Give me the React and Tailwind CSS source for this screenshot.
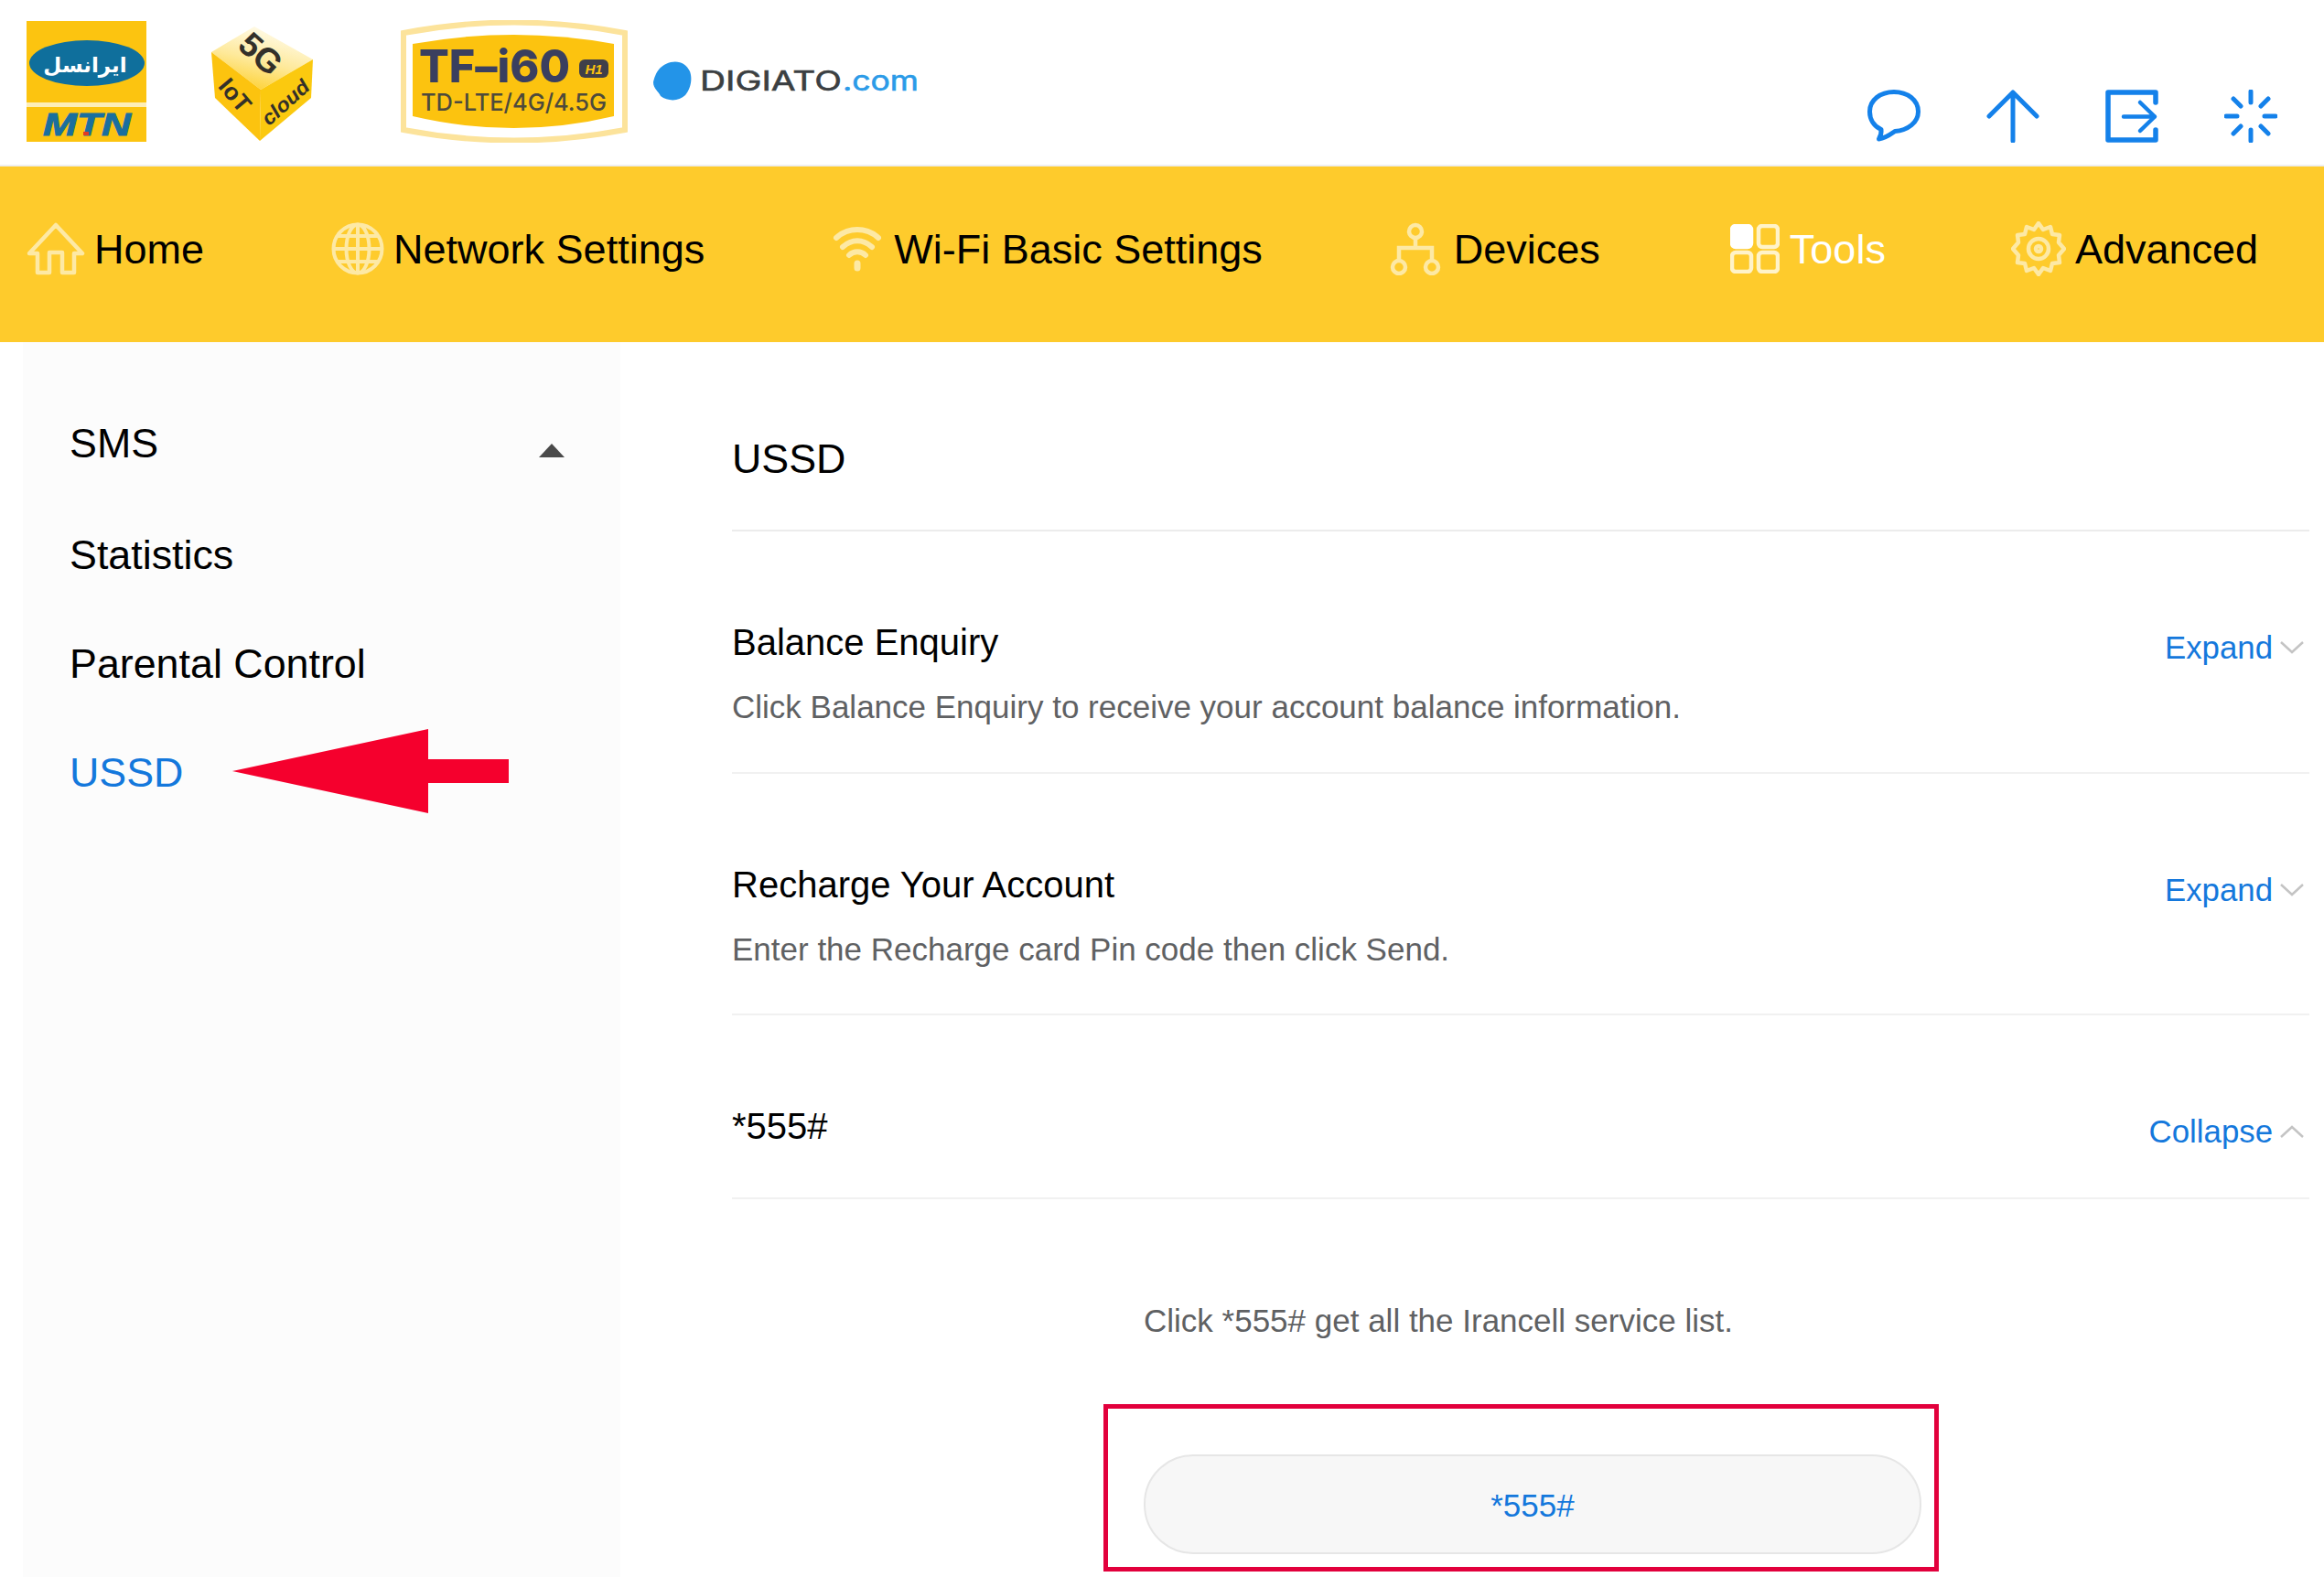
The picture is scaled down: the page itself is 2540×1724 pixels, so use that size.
import React from "react";

const BLUE = "#1481ea";

const MtnLogo = () => (
    <svg width="131" height="132" viewBox="0 0 131 132" className="shrink-0">
        <rect x="0" y="0" width="131" height="132" fill="#fcc410" />
        <rect x="0" y="89" width="131" height="5" fill="#fdeeb8" />
        <ellipse cx="66" cy="46" rx="63" ry="25" fill="#0f6f9c" />
        <text x="64" y="56" textAnchor="middle" fontSize="23" fontWeight="700" fontFamily="'DejaVu Sans', sans-serif" fill="#fff">ایرانسل</text>
        <text x="66" y="125" textAnchor="middle" fontSize="35" fontWeight="700" fontStyle="italic" fontFamily="'Liberation Sans', sans-serif" fill="#1a6f9e" stroke="#1a6f9e" strokeWidth="1" textLength="96" lengthAdjust="spacingAndGlyphs">MTN</text>
        <rect x="62" y="121" width="6" height="4" fill="#e23b24" />
    </svg>
);

const CubeLogo = () => (
    <svg width="114" height="130" viewBox="0 0 114 130" className="shrink-0">
        <defs>
            <linearGradient id="cubeTop" x1="0.7" y1="0" x2="0.3" y2="1">
                <stop offset="0" stopColor="#fffdf4" />
                <stop offset="0.55" stopColor="#fee99a" />
                <stop offset="1" stopColor="#fdd02f" />
            </linearGradient>
        </defs>
        <polygon points="47,3 111,39 54,72 0,31" fill="url(#cubeTop)" />
        <polygon points="0,31 54,72 53,128 4,81" fill="#fcc30f" />
        <polygon points="111,39 54,72 53,128 109,81" fill="#fbc90f" />
        <text transform="translate(54,33) rotate(42)" fontSize="37" fontWeight="700" dominantBaseline="central" fontFamily="'Liberation Sans', sans-serif" fill="#33302a" textAnchor="middle">5G</text>
        <text transform="translate(26,78) rotate(50)" fontSize="26" fontWeight="700" dominantBaseline="central" fontFamily="'Liberation Sans', sans-serif" fill="#33302a" textAnchor="middle">IoT</text>
        <text transform="translate(81,86) rotate(-42)" fontSize="22" fontWeight="700" fontStyle="italic" dominantBaseline="central" fontFamily="'Liberation Sans', sans-serif" fill="#33302a" textAnchor="middle" textLength="62" lengthAdjust="spacingAndGlyphs">cloud</text>
    </svg>
);

const ModelBadge = () => (
    <svg width="248" height="134" viewBox="0 0 248 134" className="shrink-0">
        <path d="M3 14 Q124 -9 245 14 L245 120 Q124 143 3 120 Z" fill="#fff" stroke="#fce39b" strokeWidth="6" />
        <path d="M13 26 Q124 6 233 26 L233 105 Q124 131 13 105 Z" fill="#fcc30f" />
        <text x="20" y="68" fontSize="49" fontWeight="800" fontFamily="Inter, sans-serif" fill="#3a3f5f" textLength="165" lengthAdjust="spacingAndGlyphs">TF–i60</text>
        <rect x="195" y="43" width="32" height="20" rx="6" fill="#3f3f4a" />
        <text x="211" y="59" textAnchor="middle" fontSize="15" fontWeight="700" fontStyle="italic" fontFamily="'Liberation Sans', sans-serif" fill="#fcc30f">H1</text>
        <text x="22" y="99" fontSize="26" fontWeight="500" fontFamily="Inter, sans-serif" fill="#4d4a3c" textLength="203" lengthAdjust="spacingAndGlyphs">TD-LTE/4G/4.5G</text>
    </svg>
);

const DigiatoLogo = () => (
    <svg width="294" height="44" viewBox="0 0 294 44" className="shrink-0">
        <path d="M20 1C30 -1 37 3 41 11C44 19 42 30 36 37C29 44 17 44 9 38C7 33 1 30 1 23C3 15 6 5 20 1Z" fill="#2394e8" />
        <text x="52" y="32" fontSize="30" fontFamily="Inter, sans-serif" fill="#3b3f42" stroke="#3b3f42" strokeWidth="0.6" textLength="155" lengthAdjust="spacingAndGlyphs">DIGIATO</text>
        <text x="208" y="32" fontSize="30" fontFamily="Inter, sans-serif" fill="#2b9be8" stroke="#2b9be8" strokeWidth="0.6" textLength="83" lengthAdjust="spacingAndGlyphs">.com</text>
    </svg>
);

const ChatIcon = () => (
    <svg width="58" height="58" viewBox="0 0 58 58" fill="none" stroke={BLUE} strokeWidth="5" strokeLinejoin="round" strokeLinecap="round">
        <path d="M29 2.5C44 2.5 55.5 11.5 55.5 24C55.5 36 44 44.5 30 45.5C25 49 20 53 12.5 54C14.5 50.5 15.5 47.5 15 43.5C7 40 2.5 32.5 2.5 24C2.5 11.5 14 2.5 29 2.5Z" />
    </svg>
);

const UpIcon = () => (
    <svg width="58" height="58" viewBox="0 0 58 58" fill="none" stroke={BLUE} strokeWidth="5" strokeLinecap="round" strokeLinejoin="round">
        <path d="M29 3V56M3 29L29 3L55 29" />
    </svg>
);

const LogoutIcon = () => (
    <svg width="58" height="58" viewBox="0 0 58 58" fill="none" stroke={BLUE} strokeWidth="5.5" strokeLinecap="round" strokeLinejoin="round">
        <path d="M55 14V3H3V55H55V44" />
        <path d="M20 29.500H54M38 14L54 29.500L38 45" strokeWidth="4.500" />
    </svg>
);

const SpinnerIcon = () => (
    <svg width="58" height="58" viewBox="0 0 58 58" fill="none" stroke={BLUE} strokeWidth="5" strokeLinecap="round">
        <path d="M29 2V14M29 44V56M2 29H14M44 29H56M10 10L18 18M40 40L48 48M48 10L40 18M18 40L10 48" />
    </svg>
);

const NAV_STROKE = "#fde9a5";

const HomeIcon = () => (
    <svg width="64" height="58" viewBox="0 0 64 58" fill="none" stroke={NAV_STROKE} strokeWidth="4.500" strokeLinejoin="round">
        <path d="M3 34L32 3L61 34H52V55H39V33H25V55H12V34Z" />
    </svg>
);

const GlobeIcon = () => (
    <svg width="58" height="58" viewBox="0 0 58 58" fill="none" stroke={NAV_STROKE} strokeWidth="4">
        <circle cx="29" cy="29" r="26.500" />
        <ellipse cx="29" cy="29" rx="12.500" ry="26.500" />
        <path d="M29 2.500V55.500M2.500 29H55.500M7 15H51M7 43H51" />
    </svg>
);

const WifiIcon = () => (
    <svg width="56" height="50" viewBox="0 0 56 50" fill="none" stroke={NAV_STROKE} strokeWidth="6" strokeLinecap="round">
        <path d="M5 13C18 1 38 1 51 13M12 23C22 14 34 14 44 23M19 32C24 27 32 27 37 32" />
        <path d="M28 41V46" strokeWidth="7" />
    </svg>
);

const DevicesIcon = () => (
    <svg width="56" height="58" viewBox="0 0 56 58" fill="none" stroke={NAV_STROKE} strokeWidth="4.500">
        <circle cx="28" cy="10" r="7" />
        <path d="M28 17V28M10 42V28H46V42" />
        <circle cx="10" cy="49" r="7" />
        <circle cx="46" cy="49" r="7" />
    </svg>
);

const ToolsIcon = () => (
    <svg width="54" height="54" viewBox="0 0 54 54" fill="none" stroke="#fff3c9" strokeWidth="4.500">
        <rect x="2" y="2" width="21" height="23" rx="4" fill="#fff" stroke="#fff" />
        <rect x="31" y="2" width="21" height="23" rx="4" />
        <rect x="2" y="31" width="21" height="21" rx="4" />
        <rect x="31" y="31" width="21" height="21" rx="4" />
    </svg>
);

const GearIcon = () => (
    <svg width="60" height="60" viewBox="0 0 60 60" fill="none" stroke={NAV_STROKE} strokeWidth="4.500" strokeLinejoin="round">
        <path d="M30 2L35 9L43 6L45 14L53 15L52 23L58 30L52 37L53 45L45 46L43 54L35 51L30 58L25 51L17 54L15 46L7 45L8 37L2 30L8 23L7 15L15 14L17 6L25 9Z" />
        <circle cx="30" cy="30" r="11" />
        <circle cx="30" cy="30" r="3" />
    </svg>
);

const navItems = [
    { label: "Home", icon: <HomeIcon />, gap: "gap-[10px]", text: "text-black" },
    { label: "Network Settings", icon: <GlobeIcon />, gap: "gap-[10px]", text: "text-black" },
    { label: "Wi-Fi Basic Settings", icon: <WifiIcon />, gap: "gap-[12px]", text: "text-black" },
    { label: "Devices", icon: <DevicesIcon />, gap: "gap-[14px]", text: "text-black" },
    { label: "Tools", icon: <ToolsIcon />, gap: "gap-[11px] ml-[3px]", text: "text-white" },
    { label: "Advanced", icon: <GearIcon />, gap: "gap-[10px] -ml-[2px]", text: "text-black" },
];

const Chevron = ({ up }) => (
    <svg width="26" height="14" viewBox="0 0 26 14" fill="none" stroke="#c4c4c4" strokeWidth="2.500">
        <path d={up ? "M1 13L13 2L25 13" : "M1 1L13 12L25 1"} />
    </svg>
);

const Toggle = ({ label, up }) => (
    <div className="flex items-center gap-[8px] mt-[8px] text-[34.800px] leading-[36px] text-[#1478dc]">
        <span>{label}</span>
        <Chevron up={up} />
    </div>
);

const Section = ({ title, desc, toggle, up, height }) => (
    <div className={`border-b-2 border-[#f1f1f1] pt-[101px] pr-[6px] ${height}`}>
        <div className="flex justify-between items-start">
            <div className="text-[40px] leading-[40px] text-black">{title}</div>
            <Toggle label={toggle} up={up} />
        </div>
        {desc && <div className="mt-[29px] text-[35px] leading-[36px] text-[#5f6163]">{desc}</div>}
    </div>
);

export default function App() {
    return (
        <div className="w-[2540px] h-[1724px] overflow-hidden bg-white font-['Liberation_Sans',Arial,sans-serif]">
            <header className="h-[182px] border-b-2 border-[#efefef] flex items-start pl-[29px]">
                <div className="mt-[22px] flex items-start">
                    <div className="mt-[1px]"><MtnLogo /></div>
                    <div className="ml-[71px] mt-[4px]"><CubeLogo /></div>
                    <div className="ml-[93px]"><ModelBadge /></div>
                    <div className="ml-[27px] mt-[45px]"><DigiatoLogo /></div>
                </div>
                <div className="ml-auto mt-[98px] mr-[51px] flex gap-[72px]">
                    <ChatIcon />
                    <UpIcon />
                    <LogoutIcon />
                    <SpinnerIcon />
                </div>
            </header>

            <nav className="h-[192px] bg-[#fecb2c] flex items-center gap-[139px] pl-[29px] pb-[12px] text-[45px] leading-none">
                {navItems.map((item) => (
                    <div key={item.label} className={`flex items-center ${item.gap} ${item.text}`}>
                        {item.icon}
                        <span>{item.label}</span>
                    </div>
                ))}
            </nav>

            <div className="flex">
                <aside className="ml-[25px] w-[653px] h-[1350px] bg-[#fcfcfc] pl-[51px] pt-[88px] text-[44.800px] leading-[44px] text-black">
                    <div className="flex h-[122px]">
                        <span>SMS</span>
                        <svg width="28" height="15" viewBox="0 0 28 15" className="ml-[416px] mt-[23px]">
                            <polygon points="14,0 28,15 0,15" fill="#4a4a4a" />
                        </svg>
                    </div>
                    <div className="h-[119px]">Statistics</div>
                    <div className="h-[119px]">Parental Control</div>
                    <div className="flex items-start">
                        <span className="text-[#1478dc]">USSD</span>
                        <svg width="302" height="92" viewBox="0 0 302 92" className="ml-[54px] -mt-[25px]">
                            <polygon points="0,46 214,0 214,33 302,33 302,59 214,59 214,92" fill="#f5002d" />
                        </svg>
                    </div>
                </aside>

                <main className="ml-[122px] w-[1724px]">
                    <div className="h-[207px] border-b-2 border-[#ececec] pt-[105px] text-[44.800px] leading-[44px] text-black">USSD</div>
                    <Section title="Balance Enquiry" desc="Click Balance Enquiry to receive your account balance information." toggle="Expand" height="h-[265px]" />
                    <Section title="Recharge Your Account" desc="Enter the Recharge card Pin code then click Send." toggle="Expand" height="h-[264px]" />
                    <Section title="*555#" toggle="Collapse" up height="h-[201px]" />
                    <div className="pt-[115px] pl-[450px] text-[35px] leading-[36px] text-[#5f6163]">Click *555# get all the Irancell service list.</div>
                    <div className="ml-[406px] mt-[73px] w-[913px] h-[183px] border-[5px] border-[#e2003c] pl-[39px] pt-[50px]">
                        <div className="w-[850px] h-[109px] rounded-[54px] border-2 border-[#e6e6e6] bg-[#f7f7f7] flex items-center justify-center pt-[4px] text-[35px] text-[#1478dc]">*555#</div>
                    </div>
                </main>
            </div>
        </div>
    );
}
